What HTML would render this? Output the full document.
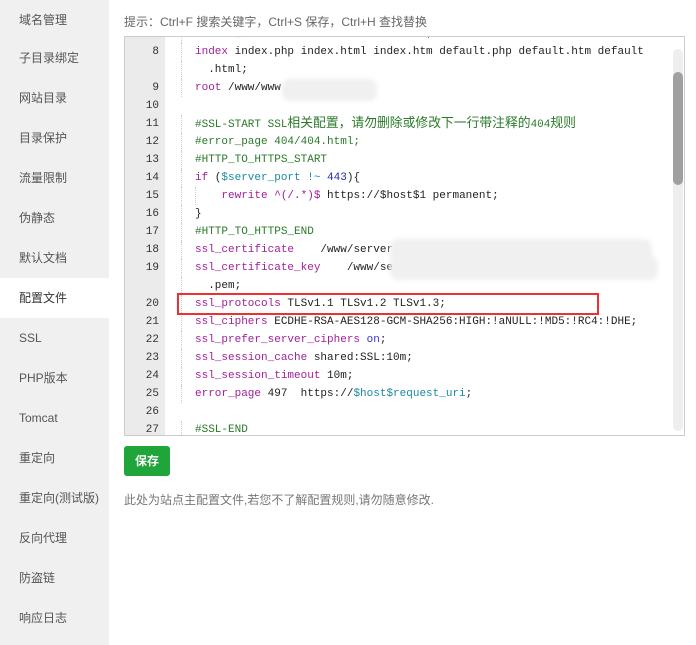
<!DOCTYPE html>
<html><head><meta charset="utf-8"><style>
*{margin:0;padding:0;box-sizing:border-box}
body{width:696px;height:645px;background:#fff;position:relative;overflow:hidden;font-family:"Liberation Sans","Noto Sans CJK SC",sans-serif}
.side{position:absolute;left:0;top:0;width:109px;height:645px;background:#f0f0f0}
.side div{position:absolute;left:19px;font-size:12px;color:#555;height:40px;line-height:40px}
.sel{position:absolute;left:0;top:278px;width:109px;height:40px;background:#fff}
.tip{position:absolute;left:124px;top:13px;font-size:12px;color:#666}
.ed{position:absolute;left:124px;top:36px;width:561px;height:400px;border:1px solid #ccc;overflow:hidden;background:#fff}
.gut{position:absolute;left:0;top:0;width:40px;height:100%;background:#ebebeb}
.code{position:absolute;left:0;top:-12px;width:100%}
.r{height:18px;line-height:18px;font-family:"Liberation Mono","Noto Sans CJK SC",monospace;font-size:11px;color:#222;white-space:pre;position:relative}
.n{position:absolute;left:0;width:34px;text-align:right;color:#333}
.t{position:absolute;left:70px}
.g{position:absolute;left:56px;top:0;height:18px;border-left:1px dotted #ccc}
.k{color:#a0209a}.c{color:#2a7a2a}.v{color:#1a8aa0}.b{color:#3333dd}.num{color:#2a2ab0}
.cj{font-size:12.8px}
.sb{position:absolute;right:1px;top:12px;width:10px;height:382px;background:#eee;border-radius:5px}
.th{position:absolute;right:1px;top:35px;width:10px;height:113px;background:#a0a0a0;border-radius:5px}
.blur{position:absolute;background:#f0f0f0;border-radius:8px;filter:blur(2px)}
.red{position:absolute;left:177px;top:293px;width:422px;height:22px;border:2px solid #ee3030}
.btn{position:absolute;left:124px;top:446px;width:46px;height:30px;background:#20a53a;border-radius:3px;color:#fff;font-size:12px;font-weight:bold;text-align:center;line-height:30px}
.note{position:absolute;left:124px;top:491px;font-size:12px;color:#777}
</style></head><body>
<div class="side">
<div style="top:0">域名管理</div><div style="top:38px">子目录绑定</div><div style="top:78px">网站目录</div><div style="top:118px">目录保护</div><div style="top:158px">流量限制</div><div style="top:198px">伪静态</div><div style="top:238px">默认文档</div>
<span class="sel"></span>
<div style="top:278px;color:#333">配置文件</div><div style="top:318px">SSL</div><div style="top:358px">PHP版本</div><div style="top:398px">Tomcat</div><div style="top:438px">重定向</div><div style="top:478px">重定向(测试版)</div><div style="top:518px">反向代理</div><div style="top:558px">防盗链</div><div style="top:598px">响应日志</div>
</div>
<div class="tip">提示：Ctrl+F 搜索关键字，Ctrl+S 保存，Ctrl+H 查找替换</div>
<div class="ed">
<div class="gut"></div>
<div class="code">
<div class="r"><span class="n">7</span><span class="g"></span><span class="t"><span class="k">server_name</span> xxx.xxx.xxx xxxxxxx.xxx;</span></div>
<div class="r"><span class="n">8</span><span class="g"></span><span class="t"><span class="k">index</span> index.php index.html index.htm default.php default.htm default</span></div>
<div class="r"><span class="g"></span><span class="t">  .html;</span></div>
<div class="r"><span class="n">9</span><span class="g"></span><span class="t"><span class="k">root</span> /www/www</span></div>
<div class="r"><span class="n">10</span></div>
<div class="r"><span class="n">11</span><span class="g"></span><span class="t c">#SSL-START SSL<span class="cj">相关配置，请勿删除或修改下一行带注释的</span>404<span class="cj">规则</span></span></div>
<div class="r"><span class="n">12</span><span class="g"></span><span class="t c">#error_page 404/404.html;</span></div>
<div class="r"><span class="n">13</span><span class="g"></span><span class="t c">#HTTP_TO_HTTPS_START</span></div>
<div class="r"><span class="n">14</span><span class="g"></span><span class="t"><span class="k">if</span> (<span class="v">$server_port</span> <span class="v">!~</span> <span class="num">443</span>){</span></div>
<div class="r"><span class="n">15</span><span class="g"></span><span class="g" style="left:70px"></span><span class="t">    <span class="k">rewrite</span> <span class="k">^(/.*)$</span> https://$host$1 permanent;</span></div>
<div class="r"><span class="n">16</span><span class="g"></span><span class="t">}</span></div>
<div class="r"><span class="n">17</span><span class="g"></span><span class="t c">#HTTP_TO_HTTPS_END</span></div>
<div class="r"><span class="n">18</span><span class="g"></span><span class="t"><span class="k">ssl_certificate</span>    /www/server/pan                                         n;</span></div>
<div class="r"><span class="n">19</span><span class="g"></span><span class="t"><span class="k">ssl_certificate_key</span>    /www/server/</span></div>
<div class="r"><span class="g"></span><span class="t">  .pem;</span></div>
<div class="r"><span class="n">20</span><span class="g"></span><span class="t"><span class="k">ssl_protocols</span> TLSv1.1 TLSv1.2 TLSv1.3;</span></div>
<div class="r"><span class="n">21</span><span class="g"></span><span class="t"><span class="k">ssl_ciphers</span> ECDHE-RSA-AES128-GCM-SHA256:HIGH:!aNULL:!MD5:!RC4:!DHE;</span></div>
<div class="r"><span class="n">22</span><span class="g"></span><span class="t"><span class="k">ssl_prefer_server_ciphers</span> <span class="b">on</span>;</span></div>
<div class="r"><span class="n">23</span><span class="g"></span><span class="t"><span class="k">ssl_session_cache</span> shared:SSL:10m;</span></div>
<div class="r"><span class="n">24</span><span class="g"></span><span class="t"><span class="k">ssl_session_timeout</span> 10m;</span></div>
<div class="r"><span class="n">25</span><span class="g"></span><span class="t"><span class="k">error_page</span> 497  https://<span class="v">$host$request_uri</span>;</span></div>
<div class="r"><span class="n">26</span></div>
<div class="r"><span class="n">27</span><span class="g"></span><span class="t c">#SSL-END</span></div>
</div>
<div class="sb"></div><div class="th"></div>
</div>
<div class="blur" style="left:282px;top:79px;width:95px;height:22px"></div>
<div class="blur" style="left:390px;top:239px;width:262px;height:24px"></div>
<div class="blur" style="left:390px;top:256px;width:268px;height:24px"></div>
<div class="red"></div>
<div class="btn">保存</div>
<div class="note">此处为站点主配置文件,若您不了解配置规则,请勿随意修改.</div>
</body></html>
